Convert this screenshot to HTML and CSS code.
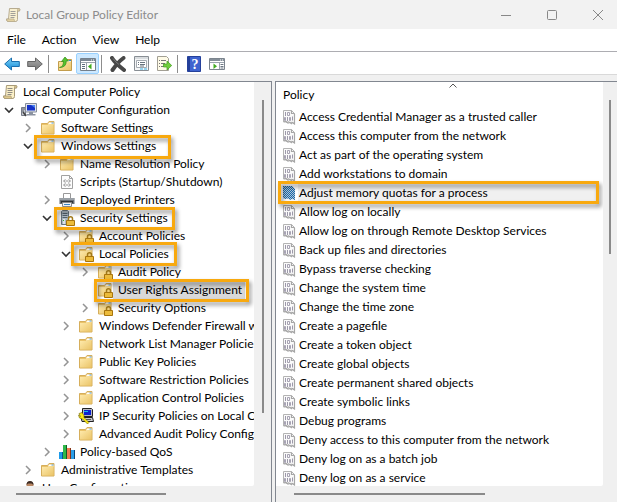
FILE: index.html
```html
<!DOCTYPE html>
<html lang="en">
<head>
<meta charset="utf-8">
<title>Local Group Policy Editor</title>
<link rel="stylesheet" href="styles.css">
</head>
<body>
<svg class="defs" aria-hidden="true">
  <defs>
    <linearGradient id="gold" x1="0" y1="0" x2="1" y2="1"><stop offset="0" stop-color="#ffebae"/><stop offset="1" stop-color="#eac468"/></linearGradient>
    <linearGradient id="blue" x1="0" y1="0" x2="0" y2="1"><stop offset="0" stop-color="#7fd4f8"/><stop offset="1" stop-color="#1389d6"/></linearGradient>
    <linearGradient id="grey" x1="0" y1="0" x2="0" y2="1"><stop offset="0" stop-color="#aaa"/><stop offset="1" stop-color="#777"/></linearGradient>
    <pattern id="dots" width="2" height="2" patternUnits="userSpaceOnUse"><rect width="2" height="2" fill="#b4c4d2"/><path fill="#1268ae" d="M0 0h1v1H0zM1 1h1v1H1z"/></pattern>
  </defs>
  <symbol id="chev" viewBox="0 0 10 10"><path d="M3 1l4 4-4 4" fill="none" stroke="#949494" stroke-width="1.5"/></symbol>
  <symbol id="chev-open" viewBox="0 0 10 10"><path d="M1 3l4 4 4-4" fill="none" stroke="#333" stroke-width="1.6"/></symbol>
  <symbol id="scroll" viewBox="0 0 16 16">
    <path d="M4.500 1.500h10q1 1 0 2.500h-2v8.500q0 2-2 2h-8q-1.500-1-1-2.500h2z" fill="#fbf0c8" stroke="#a89a78"/>
    <path d="M12.500 4V2.500q1-1.500 2 0V4zM1.500 12h7.500q0 2 1.500 2.500h-8z" fill="#dfc98d" stroke="#a89a78" stroke-width=".7"/>
    <path d="M5.500 4.500h5M5.500 6.500h5M5.500 8.500h5M5.500 10.500h4" stroke="#8e8b84"/>
  </symbol>
  <symbol id="folder" viewBox="0 0 16 16">
    <path d="M1.500 3.500h6l1.500-2h5v12.500h-12.500z" fill="#eac36a" stroke="#d6ae5b"/>
    <path d="M9 2.500h4.500v2H8z" fill="#fff"/><path d="M11.500 2.500h2v1h-2z" fill="#4b9ddb"/>
    <path d="M2 5h6l1-1h4.500v9.500H2z" fill="url(#gold)"/>
  </symbol>
  <symbol id="lock" viewBox="0 0 16 16">
    <path d="M9.500 11V8.800a2 2 0 0 1 4 0V11" fill="none" stroke="#a27a1b" stroke-width="1.500"/>
    <path d="M7.500 10.500h8v5h-8z" fill="#e7af28" stroke="#a8750d"/><path d="M8 12h7M8 14h7" stroke="#f7d35f" stroke-width=".7"/>
  </symbol>
  <symbol id="folder-lock" viewBox="0 0 16 16"><use href="#folder"/><use href="#lock"/></symbol>
  <symbol id="server-lock" viewBox="0 0 16 16">
    <path d="M2.500 1.500l1-1h5l1 1v13h-7z" fill="#aebac4" stroke="#697680"/>
    <path d="M3.500 3.500h5M3.500 5.500h5M3.500 7.500h5" stroke="#53616c"/><path d="M4 9h2v5H4z" fill="#dbe3e9"/><path d="M4 10h1v1H4z" fill="#38a834"/><use href="#lock"/>
  </symbol>
  <symbol id="computer" viewBox="0 0 16 16">
    <path d="M.5 5.500h4v8h-4z" fill="#c5c9d0" stroke="#757b88"/><path d="M1 7h3M1 9h2" stroke="#565d69"/>
    <path d="M4.500 1.500h11v8.500h-11z" fill="#dfe3ea" stroke="#858c9b"/>
    <path d="M6 3h8v5.500H6z" fill="#1532c8"/><path d="M10 3h4v3z" fill="#4a82f0"/>
    <path d="M8 10h4v2H8zM5.500 12h9v1.500h-9z" fill="#8b92a0"/><path d="M2 10l3 4" stroke="#444" stroke-width="1.500"/>
  </symbol>
  <symbol id="script" viewBox="0 0 16 16">
    <path d="M2.500 1.500h8l3 3v10h-11z" fill="#fdfdfd" stroke="#a1a1a1"/><path d="M10.500 1.500v3h3" fill="none" stroke="#a1a1a1"/>
    <path d="M6.500 5.500L4.500 7l2 1.500M9.500 5.500l2 1.500-2 1.500M6.500 9.500l-2 1.500 2 1.500M9.500 9.500l2 1.500-2 1.500M6.500 7h3M6.500 11h3" fill="none" stroke="#888" stroke-width=".9"/>
  </symbol>
  <symbol id="printer" viewBox="0 0 16 16">
    <path d="M4.500 1.500h7v5h-7z" fill="#fff" stroke="#999"/>
    <path d="M.5 6h15v6H.5z" fill="#696f75"/><path d="M1 6h14v2H1z" fill="#9aa0a6"/><path d="M2 9h12v2H2z" fill="#2f3337"/>
    <path d="M3.500 10.500h9v4h-9z" fill="#eef2f5" stroke="#8c8c8c"/><path d="M5 12.500h6" stroke="#3d86c4"/>
  </symbol>
  <symbol id="ipsec" viewBox="0 0 16 16">
    <path d="M4.500.500h9l1 1v7h-10z" fill="#b9b9c2" stroke="#222"/><path d="M6 2h7v5H6z" fill="#0a1fd0"/><path d="M6 3h4v1H6z" fill="#17b8e6"/>
    <path d="M3 9.500h11.500l1 4H4z" fill="#c9c9cf" stroke="#222"/><path d="M8 11.500h5" stroke="#555"/>
    <path d="M1 5.500l3-1 2 3 0 2 5 5-1.500 1.500-5-5-3-1-1-3 2 1.500z" fill="#fbe916" stroke="#746600" stroke-width=".6"/>
  </symbol>
  <symbol id="bars" viewBox="0 0 16 16">
    <path d="M0 8h3v7H0z" fill="#1d9bea"/><path d="M3 8h1v7H3z" fill="#075394"/>
    <path d="M4 1h3v14H4z" fill="#2fb84a"/><path d="M7 1h1v14H7z" fill="#145c25"/>
    <path d="M8 4h3v11H8z" fill="#f27b50"/><path d="M11 4h1v11h-1z" fill="#873516"/>
    <path d="M12 6h3v9h-3z" fill="#2b9ee8"/><path d="M15 6h1v9h-1z" fill="#0b4477"/>
  </symbol>
  <symbol id="user" viewBox="0 0 16 16">
    <circle cx="9" cy="5" r="3.500" fill="#b98763"/><path d="M5.500 5q0-4 3.500-4t3.500 4l-2-1.500H7z" fill="#3c2c24"/><path d="M4 15q0-6 5-6t5 6z" fill="#467cb9"/>
  </symbol>
  <symbol id="policy" viewBox="0 0 14 16">
    <path d="M1.500 1.500h8l3 3v10l-2-1-1.500 1-2-2-2 1-2-1-1.500.500z" fill="#fafafa" stroke="#b4b4b4"/>
    <path d="M9.500 1.500v3h3M12.500 5v10l-3-2M2 13l2-.5 2 1.500 2-.5 2 1.500" fill="none" stroke="#a6a6a6" stroke-width="1.200"/>
    <path d="M3.500 3v4M10.500 7.500v4M5.500 8v4" stroke="#9d99aa"/>
    <path d="M5.500 3.500h2v3h-2zM2.500 8.500h1v3h-1zM7.500 8.500h1v3h-1z" fill="none" stroke="#9d99aa" stroke-width=".9"/>
  </symbol>
  <symbol id="policy-on" viewBox="0 0 14 16"><path d="M1 1h9l3 3v11l-3-1-2 1-2-1.500-3 .5-2-1z" fill="url(#dots)"/></symbol>
  <symbol id="arrow" viewBox="0 0 16 16"><path d="M.7 8l6.800-6v3.500h7.800v5H7.500V14z"/></symbol>
</svg>

<header class="titlebar">
  <svg class="icon"><use href="#scroll"/></svg>
  <h1>Local Group Policy Editor</h1>
  <div class="window-buttons">
    <button type="button" aria-label="Minimize"><svg viewBox="0 0 10 10"><path d="M0 5.500h10"/></svg></button>
    <button type="button" aria-label="Maximize"><svg viewBox="0 0 10 10"><rect x=".5" y=".5" width="9" height="9" rx="1"/></svg></button>
    <button type="button" aria-label="Close"><svg viewBox="0 0 10 10"><path d="M0 0l10 10M10 0L0 10"/></svg></button>
  </div>
</header>

<nav class="menubar">
  <button type="button">File</button>
  <button type="button">Action</button>
  <button type="button">View</button>
  <button type="button">Help</button>
</nav>

<div class="toolbar" role="toolbar" aria-label="Tools">
  <button type="button" aria-label="Back"><svg class="icon"><use href="#arrow" fill="url(#blue)" stroke="#1a6fae"/></svg></button>
  <button type="button" aria-label="Forward"><svg class="icon flip"><use href="#arrow" fill="url(#grey)" stroke="#666"/></svg></button>
  <span class="separator"></span>
  <button type="button" aria-label="Up one level"><svg class="icon" viewBox="0 0 16 16">
    <path d="M1.500 5.500h6l1-2h6v11h-13z" fill="url(#gold)" stroke="#c39d4c"/><path d="M9 5h5" stroke="#fff"/><path d="M12 4.500h2" stroke="#398ad0"/>
    <path d="M2.500 11.500q4-.5 4-6H4.500L8 1l3.500 4H9.300q0 6.500-6.800 6.500z" fill="#55c32e" stroke="#2f8c19" stroke-width=".7"/></svg></button>
  <button type="button" class="pressed" aria-label="Show or hide console tree" aria-pressed="true"><svg class="icon" viewBox="0 0 16 16">
    <path d="M.5 2.500h15v12H.5z" fill="#fff" stroke="#74808c"/><path d="M1 3h14v2H1z" fill="#7b8794"/><path d="M11 4h1M13 4h1" stroke="#fff"/><path d="M1 6.500h14M6.500 7v7" stroke="#9aa3ad"/><path d="M2 8.500h3M2 10.500h3M2 12.500h3" stroke="#5d6c7c"/><path d="M11.500 7.500v6l-3.500-3z" fill="#41ab20"/></svg></button>
  <span class="separator"></span>
  <button type="button" aria-label="Delete"><svg class="icon" viewBox="0 0 16 16"><path d="M2 2q3 5 12 12M13.500 2Q8 6 2.500 14" fill="none" stroke="#484848" stroke-width="4" stroke-linecap="round"/><path d="M3 2.500q3 4 6 6" fill="none" stroke="#777"/></svg></button>
  <button type="button" aria-label="Properties"><svg class="icon" viewBox="0 0 16 16">
    <path d="M1.500.5h14v14h-14z" fill="#f5f6f7" stroke="#888e94"/><path d="M2 2h13" stroke="#bcc2c7"/><path d="M3.500 4.500h10v7h-10z" fill="#fff" stroke="#a5abb1"/><path d="M5 6.500h1M5 8.500h1M7 6.500h5M7 8.500h5M7 10h4" stroke="#68747f"/><path d="M7 13h3M11 13h3" stroke="#38b4e9"/></svg></button>
  <button type="button" aria-label="Export list"><svg class="icon" viewBox="0 0 16 16">
    <path d="M1.500.5h9l2 2v12h-11z" fill="#fffbe7" stroke="#a29f94"/><path d="M3 4.500h1M3 7.500h1M3 10.500h1M5 4.500h5M5 7.500h4M5 10.500h3" stroke="#777"/><path d="M7.500 8h3.500V5l4.700 4.500L11 14v-3H7.500z" fill="#72ce3e" stroke="#3f9d1e" stroke-width=".7"/></svg></button>
  <span class="separator"></span>
  <button type="button" class="help" aria-label="Help"><svg class="icon" viewBox="0 0 16 16"><path d="M1.500.5h13v15h-13z" fill="#3e63cf" stroke="#25419b"/><path d="M2 1h2v14H2z" fill="#233f9a"/><text x="9" y="13">?</text></svg></button>
  <button type="button" aria-label="Show or hide action pane"><svg class="icon" viewBox="0 0 16 16">
    <path d="M.5 2.500h15v11H.5z" fill="#fff" stroke="#7c858e"/><path d="M1 3h14v2H1z" fill="#858f99"/><path d="M11 4h1M13 4h1" stroke="#fff"/><path d="M1 6.500h14M10.500 7v6" stroke="#9aa3ad"/><path d="M11.500 8.500h3M11.500 10.500h3M11.500 12h3" stroke="#6d7884"/><path d="M4.500 7.500v5.500L8 10.200z" fill="#41ab20"/></svg></button>
</div>

<main class="panes">
  <section class="pane tree-pane" aria-label="Console tree">
    <div class="viewport">
      <ul class="tree">
        <li><div class="node root"><svg class="icon"><use href="#scroll"/></svg><span>Local Computer Policy</span></div></li>
        <li><div class="node"><button type="button" aria-label="Collapse"><svg><use href="#chev-open"/></svg></button><svg class="icon"><use href="#computer"/></svg><span>Computer Configuration</span></div>
          <ul>
            <li><div class="node"><button type="button" aria-label="Expand"><svg><use href="#chev"/></svg></button><svg class="icon"><use href="#folder"/></svg><span>Software Settings</span></div></li>
            <li><div class="node marked windows"><button type="button" aria-label="Collapse"><svg><use href="#chev-open"/></svg></button><svg class="icon"><use href="#folder"/></svg><span>Windows Settings</span></div>
              <ul>
                <li><div class="node"><button type="button" aria-label="Expand"><svg><use href="#chev"/></svg></button><svg class="icon"><use href="#folder"/></svg><span>Name Resolution Policy</span></div></li>
                <li><div class="node leaf"><svg class="icon"><use href="#script"/></svg><span>Scripts (Startup/Shutdown)</span></div></li>
                <li><div class="node"><button type="button" aria-label="Expand"><svg><use href="#chev"/></svg></button><svg class="icon"><use href="#printer"/></svg><span>Deployed Printers</span></div></li>
                <li><div class="node marked security"><button type="button" aria-label="Collapse"><svg><use href="#chev-open"/></svg></button><svg class="icon"><use href="#server-lock"/></svg><span>Security Settings</span></div>
                  <ul>
                    <li><div class="node"><button type="button" aria-label="Expand"><svg><use href="#chev"/></svg></button><svg class="icon"><use href="#folder-lock"/></svg><span>Account Policies</span></div></li>
                    <li><div class="node marked local"><button type="button" aria-label="Collapse"><svg><use href="#chev-open"/></svg></button><svg class="icon"><use href="#folder-lock"/></svg><span>Local Policies</span></div>
                      <ul>
                        <li><div class="node"><button type="button" aria-label="Expand"><svg><use href="#chev"/></svg></button><svg class="icon"><use href="#folder-lock"/></svg><span>Audit Policy</span></div></li>
                        <li><div class="node leaf marked selected"><svg class="icon"><use href="#folder-lock"/></svg><span>User Rights Assignment</span></div></li>
                        <li><div class="node"><button type="button" aria-label="Expand"><svg><use href="#chev"/></svg></button><svg class="icon"><use href="#folder-lock"/></svg><span>Security Options</span></div></li>
                      </ul>
                    </li>
                    <li><div class="node"><button type="button" aria-label="Expand"><svg><use href="#chev"/></svg></button><svg class="icon"><use href="#folder"/></svg><span>Windows Defender Firewall w</span></div></li>
                    <li><div class="node leaf"><svg class="icon"><use href="#folder"/></svg><span>Network List Manager Policie</span></div></li>
                    <li><div class="node"><button type="button" aria-label="Expand"><svg><use href="#chev"/></svg></button><svg class="icon"><use href="#folder"/></svg><span>Public Key Policies</span></div></li>
                    <li><div class="node"><button type="button" aria-label="Expand"><svg><use href="#chev"/></svg></button><svg class="icon"><use href="#folder"/></svg><span>Software Restriction Policies</span></div></li>
                    <li><div class="node"><button type="button" aria-label="Expand"><svg><use href="#chev"/></svg></button><svg class="icon"><use href="#folder"/></svg><span>Application Control Policies</span></div></li>
                    <li><div class="node"><button type="button" aria-label="Expand"><svg><use href="#chev"/></svg></button><svg class="icon"><use href="#ipsec"/></svg><span>IP Security Policies on Local C</span></div></li>
                    <li><div class="node"><button type="button" aria-label="Expand"><svg><use href="#chev"/></svg></button><svg class="icon"><use href="#folder"/></svg><span>Advanced Audit Policy Config</span></div></li>
                  </ul>
                </li>
                <li><div class="node"><button type="button" aria-label="Expand"><svg><use href="#chev"/></svg></button><svg class="icon"><use href="#bars"/></svg><span>Policy-based QoS</span></div></li>
              </ul>
            </li>
            <li><div class="node"><button type="button" aria-label="Expand"><svg><use href="#chev"/></svg></button><svg class="icon"><use href="#folder"/></svg><span>Administrative Templates</span></div></li>
          </ul>
        </li>
        <li><div class="node"><span class="spacer"></span><svg class="icon"><use href="#user"/></svg><span>User Configuration</span></div></li>
      </ul>
    </div>
    <div class="track vertical"><span class="thumb"></span></div>
    <div class="track horizontal"><span class="thumb"></span></div>
  </section>

  <section class="pane list-pane" aria-label="Policies">
    <div class="viewport">
      <svg class="sort" viewBox="0 0 8 5"><path d="M.5 4.500L4 1l3.500 3.500"/></svg>
      <table class="policies">
        <thead><tr><th scope="col">Policy</th></tr></thead>
        <tbody>
          <tr><td><div class="cell"><svg><use href="#policy"/></svg>Access Credential Manager as a trusted caller</div></td></tr>
          <tr><td><div class="cell"><svg><use href="#policy"/></svg>Access this computer from the network</div></td></tr>
          <tr><td><div class="cell"><svg><use href="#policy"/></svg>Act as part of the operating system</div></td></tr>
          <tr><td><div class="cell"><svg><use href="#policy"/></svg>Add workstations to domain</div></td></tr>
          <tr><td><div class="cell marked current"><svg><use href="#policy-on"/></svg>Adjust memory quotas for a process</div></td></tr>
          <tr><td><div class="cell"><svg><use href="#policy"/></svg>Allow log on locally</div></td></tr>
          <tr><td><div class="cell"><svg><use href="#policy"/></svg>Allow log on through Remote Desktop Services</div></td></tr>
          <tr><td><div class="cell"><svg><use href="#policy"/></svg>Back up files and directories</div></td></tr>
          <tr><td><div class="cell"><svg><use href="#policy"/></svg>Bypass traverse checking</div></td></tr>
          <tr><td><div class="cell"><svg><use href="#policy"/></svg>Change the system time</div></td></tr>
          <tr><td><div class="cell"><svg><use href="#policy"/></svg>Change the time zone</div></td></tr>
          <tr><td><div class="cell"><svg><use href="#policy"/></svg>Create a pagefile</div></td></tr>
          <tr><td><div class="cell"><svg><use href="#policy"/></svg>Create a token object</div></td></tr>
          <tr><td><div class="cell"><svg><use href="#policy"/></svg>Create global objects</div></td></tr>
          <tr><td><div class="cell"><svg><use href="#policy"/></svg>Create permanent shared objects</div></td></tr>
          <tr><td><div class="cell"><svg><use href="#policy"/></svg>Create symbolic links</div></td></tr>
          <tr><td><div class="cell"><svg><use href="#policy"/></svg>Debug programs</div></td></tr>
          <tr><td><div class="cell"><svg><use href="#policy"/></svg>Deny access to this computer from the network</div></td></tr>
          <tr><td><div class="cell"><svg><use href="#policy"/></svg>Deny log on as a batch job</div></td></tr>
          <tr><td><div class="cell"><svg><use href="#policy"/></svg>Deny log on as a service</div></td></tr>
        </tbody>
      </table>
    </div>
    <div class="track vertical"><span class="thumb"></span></div>
    <div class="track horizontal"><span class="thumb"></span></div>
  </section>
</main>
</body>
</html>
```
FILE: styles.css
```css
* {
  box-sizing: border-box;
}

body {
  display: flex;
  flex-direction: column;
  height: 100vh;
  margin: 0;
  overflow: hidden;
  background: #f0f0f0;
  color: #000;
  font: 12px/18px Lato, "Open Sans", sans-serif;
}

button {
  display: flex;
  align-items: center;
  justify-content: center;
  margin: 0;
  padding: 0;
  border: 0;
  background: none;
  color: inherit;
  font: inherit;
}

ul {
  margin: 0;
  padding: 0;
  list-style: none;
}

.defs {
  position: absolute;
  width: 0;
  height: 0;
}

.icon {
  flex: none;
  width: 16px;
  height: 16px;
}

.flip {
  transform: scaleX(-1);
}

/* Title bar */
.titlebar {
  display: flex;
  flex: none;
  align-items: center;
  gap: 5px;
  height: 29px;
  padding-left: 5px;
  background: #f2f2f2;
  color: #8c8c8c;
}

.titlebar .icon {
  opacity: 0.8;
}

.titlebar h1 {
  flex: 1;
  margin: 0;
  font-size: 12px;
  font-weight: 400;
}

.window-buttons {
  display: flex;
  gap: 8px;
}

.window-buttons button {
  width: 38px;
  height: 26px;
}

.window-buttons svg {
  width: 10px;
  height: 10px;
  overflow: visible;
  fill: none;
  stroke: #888;
}

/* Menu and toolbar */
.menubar {
  display: flex;
  flex: none;
  gap: 16px;
  height: 23px;
  padding: 0 7px;
  border-bottom: 1px solid #adadb2;
  background: #fff;
}

.toolbar {
  display: flex;
  flex: none;
  align-items: center;
  height: 23px;
  padding-top: 1px;
  border-bottom: 1px solid #d9d9d9;
  background: #fff;
}

.toolbar button {
  width: 23px;
  height: 21px;
}

.toolbar .pressed {
  border: 1px solid #99d1ff;
  border-radius: 2px;
  background: #cce8ff;
}

.help text {
  fill: #fff;
  font: bold 14px "Liberation Serif", serif;
  text-anchor: middle;
}

.separator {
  width: 1px;
  height: 18px;
  margin: 0 4px 0 2px;
  background: #8d8d8d;
}

/* Panes */
.panes {
  display: grid;
  flex: 1;
  grid-template-rows: minmax(0, 1fr);
  grid-template-columns: 272px minmax(0, 1fr);
  gap: 3px;
  min-height: 0;
  padding-top: 6px;
}

.pane {
  display: grid;
  grid-template-rows: minmax(0, 1fr) 16px;
  border-top: 1px solid #828790;
  background: #f0f0f0;
}

.tree-pane {
  grid-template-columns: minmax(0, 1fr) 17px;
  border-right: 1px solid #828790;
}

.list-pane {
  grid-template-columns: minmax(0, 1fr) 14px;
  border-left: 1px solid #828790;
}

.viewport {
  position: relative;
  overflow: hidden;
  border-bottom-right-radius: 2px;
  background: #fff;
}

.track {
  display: flex;
}

.vertical {
  justify-content: center;
  padding-top: 18px;
}

.horizontal {
  grid-column: 1 / -1;
  padding: 7px 0 0 16px;
}

.thumb {
  background: #8a8a8a;
}

.vertical .thumb {
  width: 2px;
  height: 81%;
}

.list-pane .vertical .thumb {
  height: 40%;
}

.horizontal .thumb {
  width: 59%;
  height: 2px;
}

.list-pane .horizontal {
  padding-left: 18px;
}

/* Console tree */
.tree {
  padding-top: 1px;
}

.tree ul {
  padding-left: 19px;
}

.node {
  display: flex;
  position: relative;
  align-items: center;
  width: max-content;
  height: 18px;
  padding-left: 4px;
  white-space: nowrap;
}

.node button,
.node .spacer {
  width: 10px;
  height: 18px;
  margin-right: 7px;
}

.node button svg {
  width: 10px;
  height: 10px;
}

.node span {
  padding: 0 3px 0 5px;
}

.root {
  padding-left: 2px;
}

.leaf {
  padding-left: 21px;
}

.selected span {
  background: #d9d9d9;
}

/* Orange call-out frames */
.marked::after {
  position: absolute;
  z-index: 1;
  inset: -2px -4px -3px 18px;
  border: 3px solid #f8a90f;
  content: "";
  filter: drop-shadow(2px 3px 2px rgb(0 0 0 / 45%));
  pointer-events: none;
}

.windows::after {
  inset: -2px -12px -4px 15px;
}

.local::after {
  inset: -3px -5px -3px 14px;
}

.security::after {
  inset: -2px -4px -3px 16px;
}

/* Policy list */
.policies {
  width: 100%;
  border-collapse: collapse;
}

.policies th {
  height: 25px;
  padding: 0 7px;
  font-weight: 400;
  text-align: left;
}

.policies td {
  padding: 0;
}

.cell {
  display: flex;
  position: relative;
  align-items: center;
  gap: 3px;
  height: 19px;
  padding-left: 6px;
  white-space: nowrap;
}

.cell svg {
  width: 14px;
  height: 16px;
}

.current {
  margin-right: 4px;
  background: linear-gradient(#f0f0f0, #f0f0f0) 22px 0 no-repeat;
}

.current::after {
  inset: -2px 0 -2px 2px;
}

.sort {
  position: absolute;
  top: 1px;
  left: calc(50% + 9px);
  width: 8px;
  height: 5px;
  fill: none;
  stroke: #555;
}
```
